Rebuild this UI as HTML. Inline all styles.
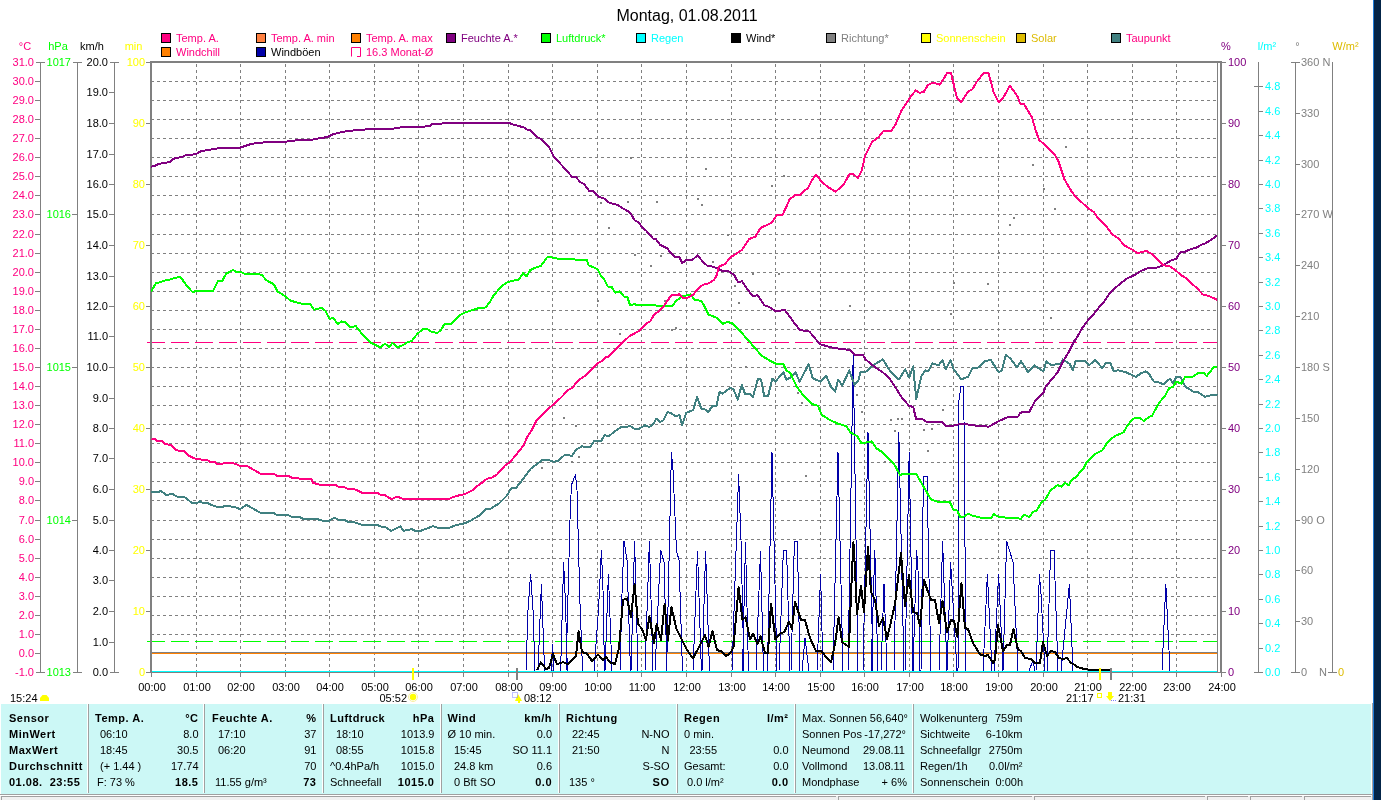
<!DOCTYPE html>
<html><head><meta charset="utf-8"><title>Wetter 01.08.2011</title>
<style>
html,body{margin:0;padding:0;background:#fff;width:1381px;height:800px;overflow:hidden}
svg{display:block;will-change:transform}
svg text{font-family:"Liberation Sans",sans-serif;font-size:11px}
</style></head><body>
<svg width="1381" height="800" viewBox="0 0 1381 800">
<rect x="0" y="0" width="1381" height="800" fill="#fff"/>
<text x="687.0" y="21.0" fill="#000" text-anchor="middle" style="font-size:16px">Montag, 01.08.2011</text>
<rect x="161.5" y="33.5" width="9" height="9" fill="#FF0080" stroke="#000" stroke-width="1"/>
<text x="176.0" y="42.0" fill="#FF0080">Temp. A.</text>
<rect x="256.5" y="33.5" width="9" height="9" fill="#FF8040" stroke="#000" stroke-width="1"/>
<text x="271.0" y="42.0" fill="#FF0080">Temp. A. min</text>
<rect x="351.5" y="33.5" width="9" height="9" fill="#FF8000" stroke="#000" stroke-width="1"/>
<text x="366.0" y="42.0" fill="#FF0080">Temp. A. max</text>
<rect x="446.5" y="33.5" width="9" height="9" fill="#800080" stroke="#000" stroke-width="1"/>
<text x="461.0" y="42.0" fill="#800080">Feuchte A.*</text>
<rect x="541.5" y="33.5" width="9" height="9" fill="#00FF00" stroke="#000" stroke-width="1"/>
<text x="556.0" y="42.0" fill="#00FF00">Luftdruck*</text>
<rect x="636.5" y="33.5" width="9" height="9" fill="#00FFFF" stroke="#000" stroke-width="1"/>
<text x="651.0" y="42.0" fill="#00FFFF">Regen</text>
<rect x="731.5" y="33.5" width="9" height="9" fill="#000" stroke="#000" stroke-width="1"/>
<text x="746.0" y="42.0" fill="#000">Wind*</text>
<rect x="826.5" y="33.5" width="9" height="9" fill="#808080" stroke="#000" stroke-width="1"/>
<text x="841.0" y="42.0" fill="#808080">Richtung*</text>
<rect x="921.5" y="33.5" width="9" height="9" fill="#FFFF00" stroke="#000" stroke-width="1"/>
<text x="936.0" y="42.0" fill="#FFFF00">Sonnenschein</text>
<rect x="1016.5" y="33.5" width="9" height="9" fill="#DDBB00" stroke="#000" stroke-width="1"/>
<text x="1031.0" y="42.0" fill="#DDBB00">Solar</text>
<rect x="1111.5" y="33.5" width="9" height="9" fill="#408080" stroke="#000" stroke-width="1"/>
<text x="1126.0" y="42.0" fill="#FF0080">Taupunkt</text>
<rect x="161.5" y="47.5" width="9" height="9" fill="#FF8000" stroke="#000" stroke-width="1"/>
<text x="176.0" y="56.0" fill="#FF0080">Windchill</text>
<rect x="256.5" y="47.5" width="9" height="9" fill="#0000A8" stroke="#000" stroke-width="1"/>
<text x="271.0" y="56.0" fill="#000">Windböen</text>
<path d="M351.5 56.5 V47.5 H360.5 V56.5 H357" fill="none" stroke="#FF0080" stroke-width="1"/>
<text x="366.0" y="56.0" fill="#FF0080">16.3 Monat-Ø</text>
<text x="25.0" y="50.0" fill="#FF0080" text-anchor="middle">°C</text>
<text x="58.0" y="50.0" fill="#00FF00" text-anchor="middle">hPa</text>
<text x="92.0" y="50.0" fill="#000" text-anchor="middle">km/h</text>
<text x="133.5" y="50.0" fill="#FFFF00" text-anchor="middle">min</text>
<text x="1226.0" y="50.0" fill="#800080" text-anchor="middle">%</text>
<text x="1267.0" y="50.0" fill="#00FFFF" text-anchor="middle">l/m²</text>
<text x="1297.5" y="50.0" fill="#808080" text-anchor="middle">°</text>
<text x="1345.5" y="50.0" fill="#DDBB00" text-anchor="middle">W/m²</text>
<g shape-rendering="crispEdges">
<line x1="40.5" y1="62" x2="40.5" y2="673" stroke="#808080" stroke-width="1"/>
<line x1="77.5" y1="62" x2="77.5" y2="673" stroke="#808080" stroke-width="1"/>
<line x1="114.5" y1="62" x2="114.5" y2="673" stroke="#808080" stroke-width="1"/>
<line x1="36" y1="62.5" x2="45" y2="62.5" stroke="#808080" stroke-width="1"/>
<text x="34.0" y="66.0" fill="#FF0080" text-anchor="end">31.0</text>
<line x1="35" y1="81.5" x2="40" y2="81.5" stroke="#808080" stroke-width="1"/>
<text x="34.0" y="85.0" fill="#FF0080" text-anchor="end">30.0</text>
<line x1="35" y1="100.5" x2="40" y2="100.5" stroke="#808080" stroke-width="1"/>
<text x="34.0" y="104.0" fill="#FF0080" text-anchor="end">29.0</text>
<line x1="35" y1="119.5" x2="40" y2="119.5" stroke="#808080" stroke-width="1"/>
<text x="34.0" y="123.0" fill="#FF0080" text-anchor="end">28.0</text>
<line x1="35" y1="138.5" x2="40" y2="138.5" stroke="#808080" stroke-width="1"/>
<text x="34.0" y="142.0" fill="#FF0080" text-anchor="end">27.0</text>
<line x1="35" y1="157.5" x2="40" y2="157.5" stroke="#808080" stroke-width="1"/>
<text x="34.0" y="161.0" fill="#FF0080" text-anchor="end">26.0</text>
<line x1="35" y1="176.5" x2="40" y2="176.5" stroke="#808080" stroke-width="1"/>
<text x="34.0" y="180.0" fill="#FF0080" text-anchor="end">25.0</text>
<line x1="35" y1="195.5" x2="40" y2="195.5" stroke="#808080" stroke-width="1"/>
<text x="34.0" y="199.0" fill="#FF0080" text-anchor="end">24.0</text>
<line x1="35" y1="214.5" x2="40" y2="214.5" stroke="#808080" stroke-width="1"/>
<text x="34.0" y="218.0" fill="#FF0080" text-anchor="end">23.0</text>
<line x1="35" y1="234.5" x2="40" y2="234.5" stroke="#808080" stroke-width="1"/>
<text x="34.0" y="238.0" fill="#FF0080" text-anchor="end">22.0</text>
<line x1="35" y1="253.5" x2="40" y2="253.5" stroke="#808080" stroke-width="1"/>
<text x="34.0" y="257.0" fill="#FF0080" text-anchor="end">21.0</text>
<line x1="35" y1="272.5" x2="40" y2="272.5" stroke="#808080" stroke-width="1"/>
<text x="34.0" y="276.0" fill="#FF0080" text-anchor="end">20.0</text>
<line x1="35" y1="291.5" x2="40" y2="291.5" stroke="#808080" stroke-width="1"/>
<text x="34.0" y="295.0" fill="#FF0080" text-anchor="end">19.0</text>
<line x1="35" y1="310.5" x2="40" y2="310.5" stroke="#808080" stroke-width="1"/>
<text x="34.0" y="314.0" fill="#FF0080" text-anchor="end">18.0</text>
<line x1="35" y1="329.5" x2="40" y2="329.5" stroke="#808080" stroke-width="1"/>
<text x="34.0" y="333.0" fill="#FF0080" text-anchor="end">17.0</text>
<line x1="35" y1="348.5" x2="40" y2="348.5" stroke="#808080" stroke-width="1"/>
<text x="34.0" y="352.0" fill="#FF0080" text-anchor="end">16.0</text>
<line x1="35" y1="367.5" x2="40" y2="367.5" stroke="#808080" stroke-width="1"/>
<text x="34.0" y="371.0" fill="#FF0080" text-anchor="end">15.0</text>
<line x1="35" y1="386.5" x2="40" y2="386.5" stroke="#808080" stroke-width="1"/>
<text x="34.0" y="390.0" fill="#FF0080" text-anchor="end">14.0</text>
<line x1="35" y1="405.5" x2="40" y2="405.5" stroke="#808080" stroke-width="1"/>
<text x="34.0" y="409.0" fill="#FF0080" text-anchor="end">13.0</text>
<line x1="35" y1="424.5" x2="40" y2="424.5" stroke="#808080" stroke-width="1"/>
<text x="34.0" y="428.0" fill="#FF0080" text-anchor="end">12.0</text>
<line x1="35" y1="443.5" x2="40" y2="443.5" stroke="#808080" stroke-width="1"/>
<text x="34.0" y="447.0" fill="#FF0080" text-anchor="end">11.0</text>
<line x1="35" y1="462.5" x2="40" y2="462.5" stroke="#808080" stroke-width="1"/>
<text x="34.0" y="466.0" fill="#FF0080" text-anchor="end">10.0</text>
<line x1="35" y1="481.5" x2="40" y2="481.5" stroke="#808080" stroke-width="1"/>
<text x="34.0" y="485.0" fill="#FF0080" text-anchor="end">9.0</text>
<line x1="35" y1="500.5" x2="40" y2="500.5" stroke="#808080" stroke-width="1"/>
<text x="34.0" y="504.0" fill="#FF0080" text-anchor="end">8.0</text>
<line x1="35" y1="520.5" x2="40" y2="520.5" stroke="#808080" stroke-width="1"/>
<text x="34.0" y="524.0" fill="#FF0080" text-anchor="end">7.0</text>
<line x1="35" y1="539.5" x2="40" y2="539.5" stroke="#808080" stroke-width="1"/>
<text x="34.0" y="543.0" fill="#FF0080" text-anchor="end">6.0</text>
<line x1="35" y1="558.5" x2="40" y2="558.5" stroke="#808080" stroke-width="1"/>
<text x="34.0" y="562.0" fill="#FF0080" text-anchor="end">5.0</text>
<line x1="35" y1="577.5" x2="40" y2="577.5" stroke="#808080" stroke-width="1"/>
<text x="34.0" y="581.0" fill="#FF0080" text-anchor="end">4.0</text>
<line x1="35" y1="596.5" x2="40" y2="596.5" stroke="#808080" stroke-width="1"/>
<text x="34.0" y="600.0" fill="#FF0080" text-anchor="end">3.0</text>
<line x1="35" y1="615.5" x2="40" y2="615.5" stroke="#808080" stroke-width="1"/>
<text x="34.0" y="619.0" fill="#FF0080" text-anchor="end">2.0</text>
<line x1="35" y1="634.5" x2="40" y2="634.5" stroke="#808080" stroke-width="1"/>
<text x="34.0" y="638.0" fill="#FF0080" text-anchor="end">1.0</text>
<line x1="35" y1="653.5" x2="40" y2="653.5" stroke="#808080" stroke-width="1"/>
<text x="34.0" y="657.0" fill="#FF0080" text-anchor="end">0.0</text>
<line x1="36" y1="672.5" x2="45" y2="672.5" stroke="#808080" stroke-width="1"/>
<text x="34.0" y="676.0" fill="#FF0080" text-anchor="end">-1.0</text>
<line x1="73" y1="62.5" x2="82" y2="62.5" stroke="#808080" stroke-width="1"/>
<text x="71.0" y="66.0" fill="#00FF00" text-anchor="end">1017</text>
<line x1="72" y1="214.5" x2="77" y2="214.5" stroke="#808080" stroke-width="1"/>
<text x="71.0" y="218.0" fill="#00FF00" text-anchor="end">1016</text>
<line x1="72" y1="367.5" x2="77" y2="367.5" stroke="#808080" stroke-width="1"/>
<text x="71.0" y="371.0" fill="#00FF00" text-anchor="end">1015</text>
<line x1="72" y1="520.5" x2="77" y2="520.5" stroke="#808080" stroke-width="1"/>
<text x="71.0" y="524.0" fill="#00FF00" text-anchor="end">1014</text>
<line x1="73" y1="672.5" x2="82" y2="672.5" stroke="#808080" stroke-width="1"/>
<text x="71.0" y="676.0" fill="#00FF00" text-anchor="end">1013</text>
<line x1="110" y1="62.5" x2="119" y2="62.5" stroke="#808080" stroke-width="1"/>
<text x="108.0" y="66.0" fill="#000" text-anchor="end">20.0</text>
<line x1="109" y1="92.5" x2="114" y2="92.5" stroke="#808080" stroke-width="1"/>
<text x="108.0" y="96.0" fill="#000" text-anchor="end">19.0</text>
<line x1="109" y1="123.5" x2="114" y2="123.5" stroke="#808080" stroke-width="1"/>
<text x="108.0" y="127.0" fill="#000" text-anchor="end">18.0</text>
<line x1="109" y1="154.5" x2="114" y2="154.5" stroke="#808080" stroke-width="1"/>
<text x="108.0" y="158.0" fill="#000" text-anchor="end">17.0</text>
<line x1="109" y1="184.5" x2="114" y2="184.5" stroke="#808080" stroke-width="1"/>
<text x="108.0" y="188.0" fill="#000" text-anchor="end">16.0</text>
<line x1="109" y1="214.5" x2="114" y2="214.5" stroke="#808080" stroke-width="1"/>
<text x="108.0" y="218.0" fill="#000" text-anchor="end">15.0</text>
<line x1="109" y1="245.5" x2="114" y2="245.5" stroke="#808080" stroke-width="1"/>
<text x="108.0" y="249.0" fill="#000" text-anchor="end">14.0</text>
<line x1="109" y1="276.5" x2="114" y2="276.5" stroke="#808080" stroke-width="1"/>
<text x="108.0" y="280.0" fill="#000" text-anchor="end">13.0</text>
<line x1="109" y1="306.5" x2="114" y2="306.5" stroke="#808080" stroke-width="1"/>
<text x="108.0" y="310.0" fill="#000" text-anchor="end">12.0</text>
<line x1="109" y1="336.5" x2="114" y2="336.5" stroke="#808080" stroke-width="1"/>
<text x="108.0" y="340.0" fill="#000" text-anchor="end">11.0</text>
<line x1="109" y1="367.5" x2="114" y2="367.5" stroke="#808080" stroke-width="1"/>
<text x="108.0" y="371.0" fill="#000" text-anchor="end">10.0</text>
<line x1="109" y1="398.5" x2="114" y2="398.5" stroke="#808080" stroke-width="1"/>
<text x="108.0" y="402.0" fill="#000" text-anchor="end">9.0</text>
<line x1="109" y1="428.5" x2="114" y2="428.5" stroke="#808080" stroke-width="1"/>
<text x="108.0" y="432.0" fill="#000" text-anchor="end">8.0</text>
<line x1="109" y1="458.5" x2="114" y2="458.5" stroke="#808080" stroke-width="1"/>
<text x="108.0" y="462.0" fill="#000" text-anchor="end">7.0</text>
<line x1="109" y1="489.5" x2="114" y2="489.5" stroke="#808080" stroke-width="1"/>
<text x="108.0" y="493.0" fill="#000" text-anchor="end">6.0</text>
<line x1="109" y1="520.5" x2="114" y2="520.5" stroke="#808080" stroke-width="1"/>
<text x="108.0" y="524.0" fill="#000" text-anchor="end">5.0</text>
<line x1="109" y1="550.5" x2="114" y2="550.5" stroke="#808080" stroke-width="1"/>
<text x="108.0" y="554.0" fill="#000" text-anchor="end">4.0</text>
<line x1="109" y1="580.5" x2="114" y2="580.5" stroke="#808080" stroke-width="1"/>
<text x="108.0" y="584.0" fill="#000" text-anchor="end">3.0</text>
<line x1="109" y1="611.5" x2="114" y2="611.5" stroke="#808080" stroke-width="1"/>
<text x="108.0" y="615.0" fill="#000" text-anchor="end">2.0</text>
<line x1="109" y1="642.5" x2="114" y2="642.5" stroke="#808080" stroke-width="1"/>
<text x="108.0" y="646.0" fill="#000" text-anchor="end">1.0</text>
<line x1="110" y1="672.5" x2="119" y2="672.5" stroke="#808080" stroke-width="1"/>
<text x="108.0" y="676.0" fill="#000" text-anchor="end">0.0</text>
<line x1="146" y1="62.5" x2="150" y2="62.5" stroke="#808080" stroke-width="1"/>
<text x="145.0" y="66.0" fill="#FFFF00" text-anchor="end">100</text>
<line x1="146" y1="123.5" x2="150" y2="123.5" stroke="#808080" stroke-width="1"/>
<text x="145.0" y="127.0" fill="#FFFF00" text-anchor="end">90</text>
<line x1="146" y1="184.5" x2="150" y2="184.5" stroke="#808080" stroke-width="1"/>
<text x="145.0" y="188.0" fill="#FFFF00" text-anchor="end">80</text>
<line x1="146" y1="245.5" x2="150" y2="245.5" stroke="#808080" stroke-width="1"/>
<text x="145.0" y="249.0" fill="#FFFF00" text-anchor="end">70</text>
<line x1="146" y1="306.5" x2="150" y2="306.5" stroke="#808080" stroke-width="1"/>
<text x="145.0" y="310.0" fill="#FFFF00" text-anchor="end">60</text>
<line x1="146" y1="367.5" x2="150" y2="367.5" stroke="#808080" stroke-width="1"/>
<text x="145.0" y="371.0" fill="#FFFF00" text-anchor="end">50</text>
<line x1="146" y1="428.5" x2="150" y2="428.5" stroke="#808080" stroke-width="1"/>
<text x="145.0" y="432.0" fill="#FFFF00" text-anchor="end">40</text>
<line x1="146" y1="489.5" x2="150" y2="489.5" stroke="#808080" stroke-width="1"/>
<text x="145.0" y="493.0" fill="#FFFF00" text-anchor="end">30</text>
<line x1="146" y1="550.5" x2="150" y2="550.5" stroke="#808080" stroke-width="1"/>
<text x="145.0" y="554.0" fill="#FFFF00" text-anchor="end">20</text>
<line x1="146" y1="611.5" x2="150" y2="611.5" stroke="#808080" stroke-width="1"/>
<text x="145.0" y="615.0" fill="#FFFF00" text-anchor="end">10</text>
<line x1="146" y1="672.5" x2="150" y2="672.5" stroke="#808080" stroke-width="1"/>
<text x="145.0" y="676.0" fill="#FFFF00" text-anchor="end">0</text>
<line x1="1222" y1="62.5" x2="1226" y2="62.5" stroke="#808080" stroke-width="1"/>
<text x="1228.0" y="66.0" fill="#800080">100</text>
<line x1="1222" y1="123.5" x2="1226" y2="123.5" stroke="#808080" stroke-width="1"/>
<text x="1228.0" y="127.0" fill="#800080">90</text>
<line x1="1222" y1="184.5" x2="1226" y2="184.5" stroke="#808080" stroke-width="1"/>
<text x="1228.0" y="188.0" fill="#800080">80</text>
<line x1="1222" y1="245.5" x2="1226" y2="245.5" stroke="#808080" stroke-width="1"/>
<text x="1228.0" y="249.0" fill="#800080">70</text>
<line x1="1222" y1="306.5" x2="1226" y2="306.5" stroke="#808080" stroke-width="1"/>
<text x="1228.0" y="310.0" fill="#800080">60</text>
<line x1="1222" y1="367.5" x2="1226" y2="367.5" stroke="#808080" stroke-width="1"/>
<text x="1228.0" y="371.0" fill="#800080">50</text>
<line x1="1222" y1="428.5" x2="1226" y2="428.5" stroke="#808080" stroke-width="1"/>
<text x="1228.0" y="432.0" fill="#800080">40</text>
<line x1="1222" y1="489.5" x2="1226" y2="489.5" stroke="#808080" stroke-width="1"/>
<text x="1228.0" y="493.0" fill="#800080">30</text>
<line x1="1222" y1="550.5" x2="1226" y2="550.5" stroke="#808080" stroke-width="1"/>
<text x="1228.0" y="554.0" fill="#800080">20</text>
<line x1="1222" y1="611.5" x2="1226" y2="611.5" stroke="#808080" stroke-width="1"/>
<text x="1228.0" y="615.0" fill="#800080">10</text>
<line x1="1222" y1="672.5" x2="1226" y2="672.5" stroke="#808080" stroke-width="1"/>
<text x="1228.0" y="676.0" fill="#800080">0</text>
<line x1="1258.5" y1="62" x2="1258.5" y2="673" stroke="#808080" stroke-width="1"/>
<line x1="1254" y1="86.5" x2="1263" y2="86.5" stroke="#808080" stroke-width="1"/>
<text x="1265.0" y="90.0" fill="#00FFFF">4.8</text>
<line x1="1259" y1="111.5" x2="1263" y2="111.5" stroke="#808080" stroke-width="1"/>
<text x="1265.0" y="115.0" fill="#00FFFF">4.6</text>
<line x1="1259" y1="135.5" x2="1263" y2="135.5" stroke="#808080" stroke-width="1"/>
<text x="1265.0" y="139.0" fill="#00FFFF">4.4</text>
<line x1="1259" y1="160.5" x2="1263" y2="160.5" stroke="#808080" stroke-width="1"/>
<text x="1265.0" y="164.0" fill="#00FFFF">4.2</text>
<line x1="1259" y1="184.5" x2="1263" y2="184.5" stroke="#808080" stroke-width="1"/>
<text x="1265.0" y="188.0" fill="#00FFFF">4.0</text>
<line x1="1259" y1="208.5" x2="1263" y2="208.5" stroke="#808080" stroke-width="1"/>
<text x="1265.0" y="212.0" fill="#00FFFF">3.8</text>
<line x1="1259" y1="233.5" x2="1263" y2="233.5" stroke="#808080" stroke-width="1"/>
<text x="1265.0" y="237.0" fill="#00FFFF">3.6</text>
<line x1="1259" y1="257.5" x2="1263" y2="257.5" stroke="#808080" stroke-width="1"/>
<text x="1265.0" y="261.0" fill="#00FFFF">3.4</text>
<line x1="1259" y1="282.5" x2="1263" y2="282.5" stroke="#808080" stroke-width="1"/>
<text x="1265.0" y="286.0" fill="#00FFFF">3.2</text>
<line x1="1259" y1="306.5" x2="1263" y2="306.5" stroke="#808080" stroke-width="1"/>
<text x="1265.0" y="310.0" fill="#00FFFF">3.0</text>
<line x1="1259" y1="330.5" x2="1263" y2="330.5" stroke="#808080" stroke-width="1"/>
<text x="1265.0" y="334.0" fill="#00FFFF">2.8</text>
<line x1="1259" y1="355.5" x2="1263" y2="355.5" stroke="#808080" stroke-width="1"/>
<text x="1265.0" y="359.0" fill="#00FFFF">2.6</text>
<line x1="1259" y1="379.5" x2="1263" y2="379.5" stroke="#808080" stroke-width="1"/>
<text x="1265.0" y="383.0" fill="#00FFFF">2.4</text>
<line x1="1259" y1="404.5" x2="1263" y2="404.5" stroke="#808080" stroke-width="1"/>
<text x="1265.0" y="408.0" fill="#00FFFF">2.2</text>
<line x1="1259" y1="428.5" x2="1263" y2="428.5" stroke="#808080" stroke-width="1"/>
<text x="1265.0" y="432.0" fill="#00FFFF">2.0</text>
<line x1="1259" y1="452.5" x2="1263" y2="452.5" stroke="#808080" stroke-width="1"/>
<text x="1265.0" y="456.0" fill="#00FFFF">1.8</text>
<line x1="1259" y1="477.5" x2="1263" y2="477.5" stroke="#808080" stroke-width="1"/>
<text x="1265.0" y="481.0" fill="#00FFFF">1.6</text>
<line x1="1259" y1="501.5" x2="1263" y2="501.5" stroke="#808080" stroke-width="1"/>
<text x="1265.0" y="505.0" fill="#00FFFF">1.4</text>
<line x1="1259" y1="526.5" x2="1263" y2="526.5" stroke="#808080" stroke-width="1"/>
<text x="1265.0" y="530.0" fill="#00FFFF">1.2</text>
<line x1="1259" y1="550.5" x2="1263" y2="550.5" stroke="#808080" stroke-width="1"/>
<text x="1265.0" y="554.0" fill="#00FFFF">1.0</text>
<line x1="1259" y1="574.5" x2="1263" y2="574.5" stroke="#808080" stroke-width="1"/>
<text x="1265.0" y="578.0" fill="#00FFFF">0.8</text>
<line x1="1259" y1="599.5" x2="1263" y2="599.5" stroke="#808080" stroke-width="1"/>
<text x="1265.0" y="603.0" fill="#00FFFF">0.6</text>
<line x1="1259" y1="623.5" x2="1263" y2="623.5" stroke="#808080" stroke-width="1"/>
<text x="1265.0" y="627.0" fill="#00FFFF">0.4</text>
<line x1="1259" y1="648.5" x2="1263" y2="648.5" stroke="#808080" stroke-width="1"/>
<text x="1265.0" y="652.0" fill="#00FFFF">0.2</text>
<line x1="1254" y1="672.5" x2="1263" y2="672.5" stroke="#808080" stroke-width="1"/>
<text x="1265.0" y="676.0" fill="#00FFFF">0.0</text>
<line x1="1295.5" y1="62" x2="1295.5" y2="673" stroke="#808080" stroke-width="1"/>
<line x1="1291" y1="62.5" x2="1300" y2="62.5" stroke="#808080" stroke-width="1"/>
<text x="1301.0" y="66.0" fill="#808080">360 N</text>
<line x1="1296" y1="113.5" x2="1300" y2="113.5" stroke="#808080" stroke-width="1"/>
<text x="1301.0" y="117.0" fill="#808080">330</text>
<line x1="1296" y1="164.5" x2="1300" y2="164.5" stroke="#808080" stroke-width="1"/>
<text x="1301.0" y="168.0" fill="#808080">300</text>
<line x1="1296" y1="214.5" x2="1300" y2="214.5" stroke="#808080" stroke-width="1"/>
<text x="1301.0" y="218.0" fill="#808080">270 W</text>
<line x1="1296" y1="265.5" x2="1300" y2="265.5" stroke="#808080" stroke-width="1"/>
<text x="1301.0" y="269.0" fill="#808080">240</text>
<line x1="1296" y1="316.5" x2="1300" y2="316.5" stroke="#808080" stroke-width="1"/>
<text x="1301.0" y="320.0" fill="#808080">210</text>
<line x1="1296" y1="367.5" x2="1300" y2="367.5" stroke="#808080" stroke-width="1"/>
<text x="1301.0" y="371.0" fill="#808080">180 S</text>
<line x1="1296" y1="418.5" x2="1300" y2="418.5" stroke="#808080" stroke-width="1"/>
<text x="1301.0" y="422.0" fill="#808080">150</text>
<line x1="1296" y1="469.5" x2="1300" y2="469.5" stroke="#808080" stroke-width="1"/>
<text x="1301.0" y="473.0" fill="#808080">120</text>
<line x1="1296" y1="520.5" x2="1300" y2="520.5" stroke="#808080" stroke-width="1"/>
<text x="1301.0" y="524.0" fill="#808080">90 O</text>
<line x1="1296" y1="570.5" x2="1300" y2="570.5" stroke="#808080" stroke-width="1"/>
<text x="1301.0" y="574.0" fill="#808080">60</text>
<line x1="1296" y1="621.5" x2="1300" y2="621.5" stroke="#808080" stroke-width="1"/>
<text x="1301.0" y="625.0" fill="#808080">30</text>
<line x1="1291" y1="672.5" x2="1300" y2="672.5" stroke="#808080" stroke-width="1"/>
<text x="1301.0" y="676.0" fill="#808080">0</text>
<text x="1319.0" y="676.0" fill="#808080">N</text>
<line x1="1332.5" y1="62" x2="1332.5" y2="673" stroke="#808080" stroke-width="1"/>
<line x1="1328" y1="672.5" x2="1337" y2="672.5" stroke="#808080" stroke-width="1"/>
<text x="1338.0" y="676.0" fill="#DDBB00">0</text>
<line x1="151" y1="81.5" x2="1217" y2="81.5" stroke="#808080" stroke-width="1" stroke-dasharray="3 3"/>
<line x1="151" y1="100.5" x2="1217" y2="100.5" stroke="#808080" stroke-width="1" stroke-dasharray="3 3"/>
<line x1="151" y1="119.5" x2="1217" y2="119.5" stroke="#808080" stroke-width="1" stroke-dasharray="3 3"/>
<line x1="151" y1="138.5" x2="1217" y2="138.5" stroke="#808080" stroke-width="1" stroke-dasharray="3 3"/>
<line x1="151" y1="157.5" x2="1217" y2="157.5" stroke="#808080" stroke-width="1" stroke-dasharray="3 3"/>
<line x1="151" y1="176.5" x2="1217" y2="176.5" stroke="#808080" stroke-width="1" stroke-dasharray="3 3"/>
<line x1="151" y1="195.5" x2="1217" y2="195.5" stroke="#808080" stroke-width="1" stroke-dasharray="3 3"/>
<line x1="151" y1="214.5" x2="1217" y2="214.5" stroke="#808080" stroke-width="1" stroke-dasharray="3 3"/>
<line x1="151" y1="234.5" x2="1217" y2="234.5" stroke="#808080" stroke-width="1" stroke-dasharray="3 3"/>
<line x1="151" y1="253.5" x2="1217" y2="253.5" stroke="#808080" stroke-width="1" stroke-dasharray="3 3"/>
<line x1="151" y1="272.5" x2="1217" y2="272.5" stroke="#808080" stroke-width="1" stroke-dasharray="3 3"/>
<line x1="151" y1="291.5" x2="1217" y2="291.5" stroke="#808080" stroke-width="1" stroke-dasharray="3 3"/>
<line x1="151" y1="310.5" x2="1217" y2="310.5" stroke="#808080" stroke-width="1" stroke-dasharray="3 3"/>
<line x1="151" y1="329.5" x2="1217" y2="329.5" stroke="#808080" stroke-width="1" stroke-dasharray="3 3"/>
<line x1="151" y1="348.5" x2="1217" y2="348.5" stroke="#808080" stroke-width="1" stroke-dasharray="3 3"/>
<line x1="151" y1="367.5" x2="1217" y2="367.5" stroke="#808080" stroke-width="1" stroke-dasharray="3 3"/>
<line x1="151" y1="386.5" x2="1217" y2="386.5" stroke="#808080" stroke-width="1" stroke-dasharray="3 3"/>
<line x1="151" y1="405.5" x2="1217" y2="405.5" stroke="#808080" stroke-width="1" stroke-dasharray="3 3"/>
<line x1="151" y1="424.5" x2="1217" y2="424.5" stroke="#808080" stroke-width="1" stroke-dasharray="3 3"/>
<line x1="151" y1="443.5" x2="1217" y2="443.5" stroke="#808080" stroke-width="1" stroke-dasharray="3 3"/>
<line x1="151" y1="462.5" x2="1217" y2="462.5" stroke="#808080" stroke-width="1" stroke-dasharray="3 3"/>
<line x1="151" y1="481.5" x2="1217" y2="481.5" stroke="#808080" stroke-width="1" stroke-dasharray="3 3"/>
<line x1="151" y1="500.5" x2="1217" y2="500.5" stroke="#808080" stroke-width="1" stroke-dasharray="3 3"/>
<line x1="151" y1="520.5" x2="1217" y2="520.5" stroke="#808080" stroke-width="1" stroke-dasharray="3 3"/>
<line x1="151" y1="539.5" x2="1217" y2="539.5" stroke="#808080" stroke-width="1" stroke-dasharray="3 3"/>
<line x1="151" y1="558.5" x2="1217" y2="558.5" stroke="#808080" stroke-width="1" stroke-dasharray="3 3"/>
<line x1="151" y1="577.5" x2="1217" y2="577.5" stroke="#808080" stroke-width="1" stroke-dasharray="3 3"/>
<line x1="151" y1="596.5" x2="1217" y2="596.5" stroke="#808080" stroke-width="1" stroke-dasharray="3 3"/>
<line x1="151" y1="615.5" x2="1217" y2="615.5" stroke="#808080" stroke-width="1" stroke-dasharray="3 3"/>
<line x1="151" y1="634.5" x2="1217" y2="634.5" stroke="#808080" stroke-width="1" stroke-dasharray="3 3"/>
<line x1="151" y1="653.5" x2="1217" y2="653.5" stroke="#808080" stroke-width="1" stroke-dasharray="3 3"/>
<line x1="196.5" y1="64" x2="196.5" y2="672" stroke="#808080" stroke-width="1" stroke-dasharray="3 3"/>
<line x1="240.5" y1="64" x2="240.5" y2="672" stroke="#808080" stroke-width="1" stroke-dasharray="3 3"/>
<line x1="285.5" y1="64" x2="285.5" y2="672" stroke="#808080" stroke-width="1" stroke-dasharray="3 3"/>
<line x1="329.5" y1="64" x2="329.5" y2="672" stroke="#808080" stroke-width="1" stroke-dasharray="3 3"/>
<line x1="374.5" y1="64" x2="374.5" y2="672" stroke="#808080" stroke-width="1" stroke-dasharray="3 3"/>
<line x1="418.5" y1="64" x2="418.5" y2="672" stroke="#808080" stroke-width="1" stroke-dasharray="3 3"/>
<line x1="463.5" y1="64" x2="463.5" y2="672" stroke="#808080" stroke-width="1" stroke-dasharray="3 3"/>
<line x1="508.5" y1="64" x2="508.5" y2="672" stroke="#808080" stroke-width="1" stroke-dasharray="3 3"/>
<line x1="552.5" y1="64" x2="552.5" y2="672" stroke="#808080" stroke-width="1" stroke-dasharray="3 3"/>
<line x1="597.5" y1="64" x2="597.5" y2="672" stroke="#808080" stroke-width="1" stroke-dasharray="3 3"/>
<line x1="641.5" y1="64" x2="641.5" y2="672" stroke="#808080" stroke-width="1" stroke-dasharray="3 3"/>
<line x1="686.5" y1="64" x2="686.5" y2="672" stroke="#808080" stroke-width="1" stroke-dasharray="3 3"/>
<line x1="731.5" y1="64" x2="731.5" y2="672" stroke="#808080" stroke-width="1" stroke-dasharray="3 3"/>
<line x1="775.5" y1="64" x2="775.5" y2="672" stroke="#808080" stroke-width="1" stroke-dasharray="3 3"/>
<line x1="820.5" y1="64" x2="820.5" y2="672" stroke="#808080" stroke-width="1" stroke-dasharray="3 3"/>
<line x1="864.5" y1="64" x2="864.5" y2="672" stroke="#808080" stroke-width="1" stroke-dasharray="3 3"/>
<line x1="909.5" y1="64" x2="909.5" y2="672" stroke="#808080" stroke-width="1" stroke-dasharray="3 3"/>
<line x1="953.5" y1="64" x2="953.5" y2="672" stroke="#808080" stroke-width="1" stroke-dasharray="3 3"/>
<line x1="998.5" y1="64" x2="998.5" y2="672" stroke="#808080" stroke-width="1" stroke-dasharray="3 3"/>
<line x1="1043.5" y1="64" x2="1043.5" y2="672" stroke="#808080" stroke-width="1" stroke-dasharray="3 3"/>
<line x1="1087.5" y1="64" x2="1087.5" y2="672" stroke="#808080" stroke-width="1" stroke-dasharray="3 3"/>
<line x1="1132.5" y1="64" x2="1132.5" y2="672" stroke="#808080" stroke-width="1" stroke-dasharray="3 3"/>
<line x1="1176.5" y1="64" x2="1176.5" y2="672" stroke="#808080" stroke-width="1" stroke-dasharray="3 3"/>
<line x1="151.5" y1="672" x2="151.5" y2="677" stroke="#808080" stroke-width="1"/>
<text x="152.0" y="691.0" fill="#000" text-anchor="middle">00:00</text>
<line x1="196.5" y1="672" x2="196.5" y2="677" stroke="#808080" stroke-width="1"/>
<text x="197.0" y="691.0" fill="#000" text-anchor="middle">01:00</text>
<line x1="240.5" y1="672" x2="240.5" y2="677" stroke="#808080" stroke-width="1"/>
<text x="241.0" y="691.0" fill="#000" text-anchor="middle">02:00</text>
<line x1="285.5" y1="672" x2="285.5" y2="677" stroke="#808080" stroke-width="1"/>
<text x="286.0" y="691.0" fill="#000" text-anchor="middle">03:00</text>
<line x1="329.5" y1="672" x2="329.5" y2="677" stroke="#808080" stroke-width="1"/>
<text x="330.0" y="691.0" fill="#000" text-anchor="middle">04:00</text>
<line x1="374.5" y1="672" x2="374.5" y2="677" stroke="#808080" stroke-width="1"/>
<text x="375.0" y="691.0" fill="#000" text-anchor="middle">05:00</text>
<line x1="418.5" y1="672" x2="418.5" y2="677" stroke="#808080" stroke-width="1"/>
<text x="419.0" y="691.0" fill="#000" text-anchor="middle">06:00</text>
<line x1="463.5" y1="672" x2="463.5" y2="677" stroke="#808080" stroke-width="1"/>
<text x="464.0" y="691.0" fill="#000" text-anchor="middle">07:00</text>
<line x1="508.5" y1="672" x2="508.5" y2="677" stroke="#808080" stroke-width="1"/>
<text x="509.0" y="691.0" fill="#000" text-anchor="middle">08:00</text>
<line x1="552.5" y1="672" x2="552.5" y2="677" stroke="#808080" stroke-width="1"/>
<text x="553.0" y="691.0" fill="#000" text-anchor="middle">09:00</text>
<line x1="597.5" y1="672" x2="597.5" y2="677" stroke="#808080" stroke-width="1"/>
<text x="598.0" y="691.0" fill="#000" text-anchor="middle">10:00</text>
<line x1="641.5" y1="672" x2="641.5" y2="677" stroke="#808080" stroke-width="1"/>
<text x="642.0" y="691.0" fill="#000" text-anchor="middle">11:00</text>
<line x1="686.5" y1="672" x2="686.5" y2="677" stroke="#808080" stroke-width="1"/>
<text x="687.0" y="691.0" fill="#000" text-anchor="middle">12:00</text>
<line x1="731.5" y1="672" x2="731.5" y2="677" stroke="#808080" stroke-width="1"/>
<text x="732.0" y="691.0" fill="#000" text-anchor="middle">13:00</text>
<line x1="775.5" y1="672" x2="775.5" y2="677" stroke="#808080" stroke-width="1"/>
<text x="776.0" y="691.0" fill="#000" text-anchor="middle">14:00</text>
<line x1="820.5" y1="672" x2="820.5" y2="677" stroke="#808080" stroke-width="1"/>
<text x="821.0" y="691.0" fill="#000" text-anchor="middle">15:00</text>
<line x1="864.5" y1="672" x2="864.5" y2="677" stroke="#808080" stroke-width="1"/>
<text x="865.0" y="691.0" fill="#000" text-anchor="middle">16:00</text>
<line x1="909.5" y1="672" x2="909.5" y2="677" stroke="#808080" stroke-width="1"/>
<text x="910.0" y="691.0" fill="#000" text-anchor="middle">17:00</text>
<line x1="953.5" y1="672" x2="953.5" y2="677" stroke="#808080" stroke-width="1"/>
<text x="954.0" y="691.0" fill="#000" text-anchor="middle">18:00</text>
<line x1="998.5" y1="672" x2="998.5" y2="677" stroke="#808080" stroke-width="1"/>
<text x="999.0" y="691.0" fill="#000" text-anchor="middle">19:00</text>
<line x1="1043.5" y1="672" x2="1043.5" y2="677" stroke="#808080" stroke-width="1"/>
<text x="1044.0" y="691.0" fill="#000" text-anchor="middle">20:00</text>
<line x1="1087.5" y1="672" x2="1087.5" y2="677" stroke="#808080" stroke-width="1"/>
<text x="1088.0" y="691.0" fill="#000" text-anchor="middle">21:00</text>
<line x1="1132.5" y1="672" x2="1132.5" y2="677" stroke="#808080" stroke-width="1"/>
<text x="1133.0" y="691.0" fill="#000" text-anchor="middle">22:00</text>
<line x1="1176.5" y1="672" x2="1176.5" y2="677" stroke="#808080" stroke-width="1"/>
<text x="1177.0" y="691.0" fill="#000" text-anchor="middle">23:00</text>
<line x1="1221.5" y1="672" x2="1221.5" y2="677" stroke="#808080" stroke-width="1"/>
<text x="1222.0" y="691.0" fill="#000" text-anchor="middle">24:00</text>
</g>
<g shape-rendering="crispEdges">
<line x1="152" y1="652.5" x2="1217" y2="652.5" stroke="#808080" stroke-width="1"/>
<line x1="152" y1="653.5" x2="1217" y2="653.5" stroke="#FF8000" stroke-width="1"/>
<line x1="147" y1="641.5" x2="1217" y2="641.5" stroke="#00FF00" stroke-width="1" stroke-dasharray="18 6"/>
<line x1="147" y1="342.5" x2="1217" y2="342.5" stroke="#FF0080" stroke-width="1" stroke-dasharray="18 6"/>
<line x1="152" y1="671.5" x2="1217" y2="671.5" stroke="#00FFFF" stroke-width="1"/>
<rect x="150" y="61" width="1072" height="2" fill="#808080"/>
<rect x="150" y="61" width="2" height="612" fill="#808080"/>
<rect x="1220" y="61" width="2" height="612" fill="#808080"/>
<rect x="150" y="672" width="1072" height="1" fill="#808080"/>
<rect x="1217" y="63" width="1" height="609" fill="#808080"/>
</g>
<rect x="1054" y="208" width="2" height="2" fill="#808080"/>
<rect x="1013" y="217" width="2" height="2" fill="#808080"/>
<rect x="1009" y="224" width="2" height="2" fill="#808080"/>
<rect x="998" y="252" width="2" height="2" fill="#808080"/>
<rect x="953" y="282" width="2" height="2" fill="#808080"/>
<rect x="987" y="283" width="2" height="2" fill="#808080"/>
<rect x="950" y="313" width="2" height="2" fill="#808080"/>
<rect x="1050" y="317" width="2" height="2" fill="#808080"/>
<rect x="942" y="409" width="2" height="2" fill="#808080"/>
<rect x="1065" y="146" width="2" height="2" fill="#808080"/>
<rect x="1032" y="164" width="2" height="2" fill="#808080"/>
<rect x="1043" y="188" width="2" height="2" fill="#808080"/>
<rect x="697" y="198" width="2" height="2" fill="#808080"/>
<rect x="701" y="204" width="2" height="2" fill="#808080"/>
<rect x="727" y="234" width="2" height="2" fill="#808080"/>
<rect x="712" y="261" width="2" height="2" fill="#808080"/>
<rect x="752" y="273" width="2" height="2" fill="#808080"/>
<rect x="778" y="273" width="2" height="2" fill="#808080"/>
<rect x="734" y="285" width="2" height="2" fill="#808080"/>
<rect x="738" y="302" width="2" height="2" fill="#808080"/>
<rect x="849" y="305" width="2" height="2" fill="#808080"/>
<rect x="745" y="366" width="2" height="2" fill="#808080"/>
<rect x="797" y="392" width="2" height="2" fill="#808080"/>
<rect x="801" y="402" width="2" height="2" fill="#808080"/>
<rect x="856" y="394" width="2" height="2" fill="#808080"/>
<rect x="861" y="411" width="2" height="2" fill="#808080"/>
<rect x="890" y="419" width="2" height="2" fill="#808080"/>
<rect x="897" y="418" width="2" height="2" fill="#808080"/>
<rect x="901" y="418" width="2" height="2" fill="#808080"/>
<rect x="894" y="430" width="2" height="2" fill="#808080"/>
<rect x="923" y="429" width="2" height="2" fill="#808080"/>
<rect x="931" y="428" width="2" height="2" fill="#808080"/>
<rect x="927" y="450" width="2" height="2" fill="#808080"/>
<rect x="884" y="461" width="2" height="2" fill="#808080"/>
<rect x="805" y="475" width="2" height="2" fill="#808080"/>
<rect x="705" y="168" width="2" height="2" fill="#808080"/>
<rect x="783" y="175" width="2" height="2" fill="#808080"/>
<rect x="771" y="185" width="2" height="2" fill="#808080"/>
<rect x="597" y="300" width="2" height="2" fill="#808080"/>
<rect x="619" y="333" width="2" height="2" fill="#808080"/>
<rect x="664" y="300" width="2" height="2" fill="#808080"/>
<rect x="671" y="329" width="2" height="2" fill="#808080"/>
<rect x="675" y="327" width="2" height="2" fill="#808080"/>
<rect x="563" y="417" width="2" height="2" fill="#808080"/>
<rect x="660" y="255" width="2" height="2" fill="#808080"/>
<rect x="630" y="157" width="2" height="2" fill="#808080"/>
<rect x="600" y="202" width="2" height="2" fill="#808080"/>
<rect x="627" y="201" width="2" height="2" fill="#808080"/>
<rect x="656" y="201" width="2" height="2" fill="#808080"/>
<rect x="608" y="227" width="2" height="2" fill="#808080"/>
<rect x="575" y="425" width="2" height="2" fill="#808080"/>
<rect x="578" y="456" width="2" height="2" fill="#808080"/>
<rect x="571" y="461" width="2" height="2" fill="#808080"/>
<rect x="541" y="467" width="2" height="2" fill="#808080"/>
<rect x="634" y="254" width="2" height="2" fill="#808080"/>
<rect x="650" y="265" width="2" height="2" fill="#808080"/>
<path d="M526.0,671 L528.0,610.0 L530.6,574.0 L533.0,610.0 L535.0,671 M538.0,671 L541.4,584.0 L544.6,671 M551.0,671 L552.6,644.0 L554.0,671 M560.6,671 L563.6,562.0 L565.5,604.0 L567.4,671 M566.0,671 L570.0,520.0 L571.4,485.0 L575.5,474.5 L577.0,490.0 L580.0,604.0 L582.6,671 M594.0,671 L598.5,610.0 L601.4,550.0 L603.0,590.0 L604.5,671 M605.0,671 L608.4,574.0 L612.0,671 M620.0,671 L622.0,594.0 L624.0,541.0 L627.0,560.0 L630.5,671 M631.0,671 L634.6,541.0 L638.0,671 M645.0,671 L649.4,541.0 L653.0,671 M655.0,671 L660.6,550.0 L664.0,562.0 L667.0,671 M666.6,671 L671.4,452.0 L673.0,470.0 L676.5,551.0 L679.0,560.0 L682.5,671 M693.0,671 L697.5,551.0 L701.4,671 M702.0,671 L705.6,551.0 L709.5,671 M732.0,671 L738.6,474.5 L741.0,540.0 L744.0,671 M742.5,671 L745.5,542.0 L748.5,671 M756.0,671 L760.5,551.0 L763.5,671 M767.4,671 L772.0,452.0 L777.0,671 M779.0,671 L783.4,550.0 L786.6,550.0 L790.0,671 M791.0,671 L794.4,541.0 L797.4,541.0 L800.0,671 M802.0,671 L805.0,638.0 L809.0,671 M817.0,671 L820.6,574.0 L823.0,671 M833.0,671 L838.0,452.0 L843.0,671 M848.0,671 L853.2,354.0 L858.0,671 M863.0,671 L868.0,432.0 L873.0,671 M871.0,671 L874.8,550.0 L878.0,671 M881.0,671 L884.0,584.0 L887.0,671 M894.0,671 L898.8,432.0 L904.0,671 M905.0,671 L909.2,452.0 L913.0,671 M913.0,671 L916.6,550.0 L918.0,570.0 L920.0,671 M921.0,671 L923.4,476.0 L927.0,476.0 L929.0,578.0 L931.0,671 M939.0,671 L942.6,541.0 L947.0,671 M947.0,671 L950.6,562.0 L957.0,671 M958.0,671 L959.0,400.0 L961.0,386.0 L963.0,386.0 L964.0,420.0 L966.0,671 M983.0,671 L987.4,574.0 L992.0,671 M994.0,671 L998.6,574.0 L1003.0,671 M1003.0,671 L1006.6,541.0 L1013.0,562.0 L1018.0,671 M1029.0,671 L1033.0,660.0 L1035.0,671 M1036.0,671 L1039.4,574.0 L1041.0,594.0 L1045.0,671 M1047.0,671 L1050.6,550.0 L1054.0,550.0 L1058.0,671 M1061.0,671 L1069.4,584.0 L1073.0,671 M1162.0,671 L1165.8,584.0 L1170.0,671" fill="none" stroke="#0000A8" stroke-width="1" shape-rendering="crispEdges"/>
<polyline points="151.5,491.5 152.0,492.0 158.1,492.0 161.2,491.0 166.2,495.0 172.3,494.0 177.4,496.6 184.5,497.0 191.6,502.7 196.6,503.5 199.7,501.1 202.7,503.1 207.8,503.1 210.8,504.8 216.9,506.8 223.0,506.8 225.0,505.6 235.2,507.2 240.2,509.2 246.3,504.8 260.5,512.9 273.7,512.9 276.7,514.9 287.9,514.9 291.9,516.9 300.0,517.3 303.1,518.9 317.3,518.9 320.3,520.4 328.4,521.0 334.5,517.7 338.6,519.8 344.6,519.8 347.7,521.8 354.8,522.4 361.9,524.8 377.1,524.8 380.1,526.4 385.2,526.9 391.3,530.9 400.4,526.4 403.4,530.9 411.5,529.1 415.6,531.1 421.7,530.5 433.2,526.1 437.2,527.7 449.4,527.7 454.5,525.7 460.6,524.1 464.6,523.3 470.7,520.6 480.8,514.6 485.9,509.1 489.9,509.1 499.1,503.4 507.2,495.3 511.2,488.2 516.3,487.6 521.4,481.1 530.5,468.9 541.7,460.4 549.8,460.4 553.8,461.8 557.9,460.8 565.0,454.7 572.1,455.8 576.1,449.7 582.2,446.2 584.2,447.0 590.3,446.6 594.4,440.6 601.5,440.6 604.5,434.9 608.6,436.5 614.6,431.4 621.7,426.8 630.9,426.4 634.9,429.0 639.0,428.8 645.1,425.3 649.1,427.0 653.2,424.3 656.2,418.7 660.3,421.9 663.3,420.3 667.4,412.2 671.4,413.2 675.5,416.2 679.5,415.2 682.0,425.2 686.1,413.0 693.2,409.9 697.2,396.8 701.3,408.9 704.3,408.9 708.4,412.0 712.4,405.9 716.5,405.9 719.5,391.7 722.6,393.7 730.7,387.6 733.7,389.7 737.8,399.8 741.8,384.6 744.9,393.7 749.9,393.7 753.0,396.8 758.1,378.5 761.1,379.5 764.1,395.8 768.2,395.8 772.3,378.5 775.3,381.6 783.4,372.4 786.4,379.5 790.5,377.5 795.6,372.4 799.6,381.6 808.7,364.3 812.8,378.5 820.9,381.6 826.0,375.5 831.0,386.6 835.1,391.7 838.1,379.5 842.2,385.6 849.3,370.4 854.4,384.6 858.4,380.6 860.4,372.4 866.5,371.4 871.6,366.4 882.8,359.3 890.9,372.4 899.0,379.5 905.1,369.4 909.1,377.5 913.2,366.4 916.2,398.8 921.3,376.5 925.3,370.4 928.4,371.4 932.4,363.3 938.5,365.3 942.6,360.3 945.6,369.4 950.7,360.3 953.7,369.4 961.3,379.5 968.4,376.5 972.4,368.4 978.5,367.4 984.6,361.3 990.7,359.9 998.8,372.4 1001.8,370.4 1005.9,354.6 1011.0,359.3 1017.0,367.4 1021.1,361.3 1028.2,372.4 1034.3,365.3 1043.4,371.4 1046.4,361.3 1050.5,364.7 1060.6,364.3 1062.7,359.3 1069.8,363.9 1072.8,370.0 1075.8,360.7 1085.0,360.7 1089.0,365.3 1095.1,359.9 1102.2,368.0 1106.3,362.7 1110.3,362.7 1113.4,370.8 1118.4,370.4 1126.5,372.4 1135.7,376.9 1140.7,373.5 1145.8,371.4 1148.8,373.5 1153.9,381.6 1160.0,382.6 1163.0,384.6 1170.1,378.5 1173.2,383.6 1176.2,376.9 1180.3,376.9 1185.3,386.6 1193.4,391.7 1198.5,392.3 1204.6,396.8 1211.7,395.1 1216.8,394.7 1217.0,393.7" fill="none" stroke="#408080" stroke-width="2" stroke-linejoin="round" shape-rendering="crispEdges"/>
<polyline points="151.5,290.6 151.5,291.0 156.1,282.8 160.1,282.4 163.2,280.8 170.3,279.4 174.3,278.0 180.4,276.8 186.5,285.5 192.6,292.2 195.6,291.0 212.9,291.0 217.9,281.4 222.0,281.4 226.0,273.9 233.1,269.9 236.2,271.9 240.2,271.9 245.3,273.9 253.4,273.9 261.5,274.7 266.6,280.4 273.7,284.1 277.7,291.6 285.8,296.6 289.9,300.3 296.0,302.3 302.1,303.7 310.2,304.3 314.2,309.8 321.3,307.8 325.4,310.8 329.4,318.9 333.5,317.9 337.5,324.0 341.6,321.4 344.6,322.0 350.7,327.5 355.8,326.0 362.9,335.2 370.0,342.3 380.1,347.3 385.2,343.7 389.2,347.3 392.3,342.9 397.4,347.3 403.4,344.9 407.5,342.3 411.5,341.2 417.6,333.5 423.5,328.9 427.9,329.4 431.4,331.9 437.5,332.9 441.0,329.8 444.5,324.0 451.5,324.0 455.0,320.1 459.4,315.4 465.5,312.2 472.5,310.1 479.5,307.9 485.6,307.5 490.0,301.8 493.5,295.6 501.4,286.4 507.5,282.1 514.5,280.4 518.9,279.5 523.2,272.9 526.4,276.4 530.2,270.2 535.5,267.6 540.8,265.9 546.9,257.6 549.5,256.6 553.0,258.0 560.0,258.9 560.2,259.1 586.6,259.8 588.7,265.3 594.7,267.9 597.8,269.4 600.8,275.5 603.9,278.5 607.9,286.6 611.5,286.6 615.2,292.6 619.6,291.4 624.0,296.6 627.5,297.5 630.1,305.4 634.5,304.1 638.0,305.4 655.5,305.4 659.0,306.2 672.1,306.2 676.5,300.6 682.3,296.4 690.4,294.4 694.5,299.5 701.6,301.1 708.7,314.7 716.8,317.7 722.9,323.8 726.9,322.2 732.0,322.8 739.1,329.9 756.0,349.1 761.1,355.2 769.2,360.3 776.3,363.9 783.4,363.9 786.4,370.4 790.5,373.5 796.6,386.6 803.7,395.8 811.8,403.9 817.9,405.9 821.9,415.0 830.0,420.1 838.1,423.7 846.3,426.2 850.3,432.3 857.4,436.3 861.5,443.4 871.6,441.4 876.7,448.5 882.8,452.5 893.9,463.7 900.0,474.8 905.1,473.8 916.2,473.8 922.9,485.5 930.9,499.4 940.0,502.4 950.1,502.4 953.2,509.5 957.2,510.6 960.3,517.0 963.3,517.0 968.4,513.6 972.4,515.6 980.6,517.6 991.7,517.6 993.7,514.2 998.8,517.0 1013.0,518.1 1021.1,518.7 1024.1,514.6 1029.2,517.0 1033.3,511.6 1036.3,511.0 1041.4,502.4 1045.4,499.4 1050.5,490.3 1057.6,485.2 1061.7,486.6 1064.7,482.6 1068.7,485.2 1071.8,479.9 1075.8,477.1 1084.0,467.7 1087.0,461.7 1094.1,454.6 1102.2,450.5 1107.3,442.4 1114.4,436.3 1123.5,432.3 1126.5,427.2 1132.6,418.7 1139.7,417.5 1143.8,421.1 1148.8,417.0 1151.9,416.0 1159.0,402.9 1165.1,395.8 1169.1,388.3 1173.2,386.6 1176.2,381.6 1181.3,383.6 1185.3,376.9 1191.4,377.5 1197.5,373.5 1203.6,372.8 1206.6,376.1 1213.7,367.4 1217.0,367.4" fill="none" stroke="#00FF00" stroke-width="2" stroke-linejoin="round" shape-rendering="crispEdges"/>
<polyline points="151.5,165.9 151.5,166.7 156.2,165.3 158.2,163.9 165.3,162.9 170.3,161.8 173.4,158.8 177.4,157.8 182.5,156.8 185.6,155.1 195.7,154.3 199.7,151.7 203.8,150.7 209.9,149.7 216.0,148.7 224.1,147.6 240.3,147.6 244.3,146.2 250.4,144.2 256.5,143.0 266.7,142.2 286.9,141.6 291.0,140.6 311.3,140.1 315.3,138.9 321.4,138.1 327.5,136.9 333.6,134.1 341.7,132.0 349.8,130.8 357.9,130.0 372.1,129.0 398.4,128.4 400.5,127.4 418.7,127.4 430.1,125.8 432.2,124.2 441.3,123.8 443.3,123.0 509.2,123.0 513.3,124.6 519.3,126.2 523.4,127.2 526.4,129.3 530.5,130.3 537.6,137.4 541.7,139.4 548.7,146.5 553.8,156.6 565.0,168.8 572.1,176.9 576.1,177.3 580.2,182.0 584.2,184.0 589.3,191.1 593.4,191.1 599.4,197.2 603.5,198.2 609.6,202.9 617.7,204.9 622.8,208.3 629.8,212.4 634.9,220.5 639.0,222.5 642.0,227.6 646.1,230.6 653.2,238.7 656.2,239.4 660.0,244.7 667.1,248.4 674.2,256.5 679.3,256.9 682.3,263.0 686.4,259.9 692.4,259.9 697.5,255.3 702.6,261.4 707.6,266.0 712.7,266.6 718.8,269.1 722.9,271.1 728.9,271.5 734.0,274.8 738.1,282.3 742.1,281.2 747.2,289.3 753.3,296.4 757.3,295.0 764.4,305.2 770.5,307.6 775.6,311.2 784.7,310.0 791.8,319.4 794.8,323.8 799.9,329.9 809.4,331.6 819.9,344.1 830.0,347.1 838.1,348.5 850.3,350.1 854.4,354.6 862.5,354.6 865.5,359.3 872.6,365.3 882.8,372.4 888.8,377.5 894.9,386.6 902.0,397.8 909.1,405.9 913.2,406.9 916.2,419.5 922.3,419.1 926.3,421.7 942.6,422.1 945.6,426.2 953.7,425.6 961.3,423.5 975.5,425.6 982.6,425.6 988.7,426.8 998.8,421.1 1007.9,417.0 1018.1,416.6 1020.1,412.6 1029.2,412.0 1035.3,400.8 1043.4,392.7 1045.4,387.0 1057.6,372.4 1063.7,360.3 1069.8,350.1 1074.8,339.9 1074.8,341.0 1081.9,328.7 1086.0,322.7 1094.1,313.5 1100.2,305.8 1104.2,301.4 1110.3,292.3 1118.4,285.2 1123.5,281.1 1126.5,278.7 1134.6,275.0 1140.7,271.0 1148.8,267.9 1155.9,267.9 1163.0,265.3 1171.1,260.4 1176.2,258.8 1180.3,252.3 1185.3,251.7 1191.4,248.7 1195.5,248.3 1201.5,244.6 1205.6,243.2 1211.7,239.5 1217.0,235.5" fill="none" stroke="#800080" stroke-width="2" stroke-linejoin="round" shape-rendering="crispEdges"/>
<polyline points="151.5,438.9 152.0,439.3 155.1,439.3 157.1,440.7 162.2,440.7 165.2,444.3 170.3,444.7 176.4,450.4 183.5,450.8 189.5,456.1 194.6,458.5 200.7,459.5 206.8,459.9 209.8,461.6 214.9,462.2 216.9,463.6 223.0,463.6 225.0,462.6 235.2,463.6 239.2,465.6 247.3,466.2 253.4,469.7 260.5,473.7 273.7,473.7 276.7,475.8 287.9,475.8 291.9,477.8 302.1,478.8 311.2,479.2 313.2,482.9 320.3,484.9 336.5,485.3 338.6,486.9 344.6,487.3 347.7,488.9 354.8,489.3 361.9,492.6 377.1,492.6 380.1,494.6 385.2,495.4 391.3,499.1 397.4,496.6 403.4,499.1 430.1,499.3 432.2,498.7 449.4,498.9 452.4,497.3 460.6,494.9 464.6,494.3 472.7,490.2 478.8,484.8 482.9,482.1 486.9,478.7 491.0,478.1 497.0,474.6 501.1,469.9 505.2,465.3 509.2,462.9 515.3,455.8 523.4,445.6 527.5,436.5 531.5,430.4 536.6,420.3 550.5,406.9 557.5,400.8 561.0,397.6 568.0,390.2 572.4,387.6 578.5,380.1 585.5,375.4 592.5,368.4 597.8,363.1 602.1,360.9 605.6,357.0 608.2,356.6 615.2,350.0 622.2,343.0 629.2,336.4 634.5,333.4 638.9,331.1 646.8,322.9 650.2,321.5 653.8,315.0 659.0,311.1 664.2,305.4 671.2,295.4 675.6,294.9 679.3,294.4 682.3,297.5 688.4,297.5 693.5,294.4 696.5,290.4 702.6,284.9 708.7,283.3 713.7,280.2 716.8,275.2 718.8,266.6 724.9,264.0 731.0,256.9 736.0,253.9 742.1,249.8 749.2,239.1 755.3,236.6 760.4,228.1 771.5,222.8 776.6,215.3 782.7,214.7 789.8,199.1 795.8,194.5 800.0,194.8 808.1,187.7 812.2,179.6 816.2,174.5 821.3,181.6 828.4,187.3 835.5,191.8 843.6,184.7 849.7,173.5 852.7,173.5 857.8,178.0 861.8,170.5 864.9,156.3 872.0,142.1 879.1,136.6 883.1,131.3 891.2,130.9 895.3,124.9 901.4,110.7 909.5,98.5 915.6,90.4 919.6,92.8 923.7,92.0 927.7,85.3 932.8,82.7 939.9,84.7 947.0,73.2 951.0,73.2 957.1,98.5 961.2,102.1 968.3,91.4 972.3,89.4 976.4,82.3 983.5,73.2 988.6,73.2 993.6,92.4 998.7,102.1 1002.8,98.5 1009.8,85.9 1014.9,92.4 1018.0,97.5 1020.0,103.6 1024.0,104.2 1032.2,117.8 1035.2,128.9 1039.2,140.1 1045.3,145.1 1054.5,154.3 1058.5,161.3 1064.6,179.6 1071.7,191.8 1075.7,196.8 1088.0,208.1 1094.1,212.2 1098.1,218.2 1106.3,226.4 1112.3,234.5 1118.4,238.5 1124.5,245.6 1130.6,248.7 1137.7,253.1 1142.8,251.7 1146.8,251.1 1152.9,254.7 1163.0,265.3 1169.1,265.9 1175.2,269.9 1181.3,275.4 1186.3,278.1 1191.4,283.5 1196.5,287.6 1202.6,294.3 1209.7,296.3 1217.0,299.8" fill="none" stroke="#FF0080" stroke-width="2" stroke-linejoin="round" shape-rendering="crispEdges"/>
<polyline points="537.0,670.0 541.0,662.4 546.0,669.0 549.0,668.0 553.0,654.0 557.0,664.4 563.0,662.0 568.0,664.4 576.0,656.0 578.6,631.0 582.0,652.0 587.0,653.6 592.0,661.0 598.0,654.4 603.0,660.0 606.0,657.0 610.0,662.4 615.0,664.0 619.0,648.0 623.0,600.0 627.0,598.4 631.0,617.0 634.6,584.0 638.0,624.0 642.0,629.0 646.0,640.0 649.4,616.0 654.0,643.0 656.6,624.0 661.0,640.0 664.6,604.0 668.0,640.0 671.4,607.0 676.5,629.0 681.0,638.0 687.0,650.0 693.0,658.4 699.0,647.0 705.0,635.0 708.6,647.0 712.5,631.4 717.0,650.0 721.5,651.5 726.0,656.0 730.5,653.0 733.5,647.0 738.6,587.0 742.5,620.0 745.5,617.0 750.0,639.5 753.0,633.5 757.5,644.0 760.5,636.5 765.0,653.0 768.0,653.0 771.0,603.5 775.5,639.5 780.0,633.5 784.5,632.0 789.0,621.5 792.0,629.0 795.0,602.0 801.0,620.0 805.0,620.0 810.0,638.0 816.0,651.0 821.0,651.0 831.0,662.4 835.0,644.0 838.6,617.0 842.0,642.0 849.0,647.0 851.0,594.0 853.4,542.0 855.0,570.0 857.0,614.0 861.0,586.0 864.0,612.0 868.0,547.0 871.0,592.0 875.0,600.0 879.0,626.0 883.0,618.0 887.0,639.0 895.0,604.0 901.0,553.0 905.0,606.0 909.0,575.0 913.0,612.0 917.0,613.0 920.0,626.0 920.0,626.0 924.0,580.0 927.0,589.0 931.0,600.0 935.0,600.0 939.0,623.0 942.6,601.0 947.0,632.0 951.0,620.0 954.0,621.0 957.4,637.0 961.4,583.0 965.0,628.0 968.0,629.0 973.0,643.0 980.0,654.4 985.0,656.0 988.0,655.0 993.0,663.0 995.0,660.0 998.0,625.0 1003.0,651.0 1007.0,645.0 1010.0,645.0 1013.4,629.0 1018.0,649.6 1021.0,651.0 1025.0,658.0 1031.0,659.0 1035.0,663.0 1040.0,663.0 1043.0,642.0 1047.0,656.0 1051.0,651.0 1055.0,652.0 1059.0,658.0 1063.0,659.0 1067.0,658.0 1071.0,663.0 1075.0,665.0 1076.5,666.6 1083.3,668.8 1090.0,669.9 1099.0,670.4 1110.3,670.4" fill="none" stroke="#000" stroke-width="2" stroke-linejoin="round" shape-rendering="crispEdges"/>
<rect x="412" y="668" width="2" height="12" fill="#FFFF00"/>
<rect x="516" y="668" width="2" height="12" fill="#808080"/>
<rect x="1099" y="668" width="2" height="12" fill="#FFFF00"/>
<rect x="1110" y="668" width="2" height="12" fill="#808080"/>
<text x="10.0" y="702.0" fill="#000">15:24</text>
<path d="M40 701 L40 698 L42.5 695 L46.5 695 L49 698 L49 701 Z" fill="#FFFF00"/>
<text x="379.5" y="702.0" fill="#000">05:52</text>
<circle cx="413" cy="697" r="4.5" fill="none" stroke="#F8F0A0" stroke-width="1"/>
<circle cx="413" cy="697" r="3.2" fill="#FFFF00"/>
<path d="M518 694 L522 701 L520 701 L520 703 L518 703 L518 701 L515 701 Z" fill="#FFFF00"/>
<rect x="512.5" y="692.5" width="5" height="5" fill="none" stroke="#8080FF" stroke-width="1" stroke-dasharray="1 1"/>
<text x="524.0" y="702.0" fill="#000">08:12</text>
<text x="1066.0" y="702.0" fill="#000">21:17</text>
<rect x="1097.5" y="693.5" width="4" height="4" fill="none" stroke="#FFFF00"/>
<path d="M1108 692 L1112 692 L1112 696 L1114 696 L1110 701 L1106 696 L1108 696 Z" fill="#FFFF00"/>
<path d="M1111 700.5 H1116" stroke="#8080FF" stroke-width="1" stroke-dasharray="1 1"/>
<text x="1118.0" y="702.0" fill="#000">21:31</text>
<rect x="1" y="704" width="1372" height="90" fill="#CCF8F6"/>
<rect x="87" y="704" width="1" height="89" fill="#FFFFFF"/>
<rect x="88" y="704" width="1" height="89" fill="#A0A0A0"/>
<rect x="203" y="704" width="1" height="89" fill="#FFFFFF"/>
<rect x="204" y="704" width="1" height="89" fill="#A0A0A0"/>
<rect x="322" y="704" width="1" height="89" fill="#FFFFFF"/>
<rect x="323" y="704" width="1" height="89" fill="#A0A0A0"/>
<rect x="440" y="704" width="1" height="89" fill="#FFFFFF"/>
<rect x="441" y="704" width="1" height="89" fill="#A0A0A0"/>
<rect x="558" y="704" width="1" height="89" fill="#FFFFFF"/>
<rect x="559" y="704" width="1" height="89" fill="#A0A0A0"/>
<rect x="676" y="704" width="1" height="89" fill="#FFFFFF"/>
<rect x="677" y="704" width="1" height="89" fill="#A0A0A0"/>
<rect x="794" y="704" width="1" height="89" fill="#FFFFFF"/>
<rect x="795" y="704" width="1" height="89" fill="#A0A0A0"/>
<rect x="912" y="704" width="1" height="89" fill="#FFFFFF"/>
<rect x="913" y="704" width="1" height="89" fill="#A0A0A0"/>
<text x="9.0" y="722.0" fill="#000" font-weight="bold" letter-spacing="0.5">Sensor</text>
<text x="9.0" y="738.0" fill="#000" font-weight="bold" letter-spacing="0.5">MinWert</text>
<text x="9.0" y="754.0" fill="#000" font-weight="bold" letter-spacing="0.5">MaxWert</text>
<text x="9.0" y="770.0" fill="#000" font-weight="bold" letter-spacing="0.5">Durchschnitt</text>
<text x="9.0" y="786.0" fill="#000" font-weight="bold" letter-spacing="0.5">01.08.  23:55</text>
<text x="95.0" y="722.0" fill="#000" font-weight="bold" letter-spacing="0.5">Temp. A.</text>
<text x="198.5" y="722.0" fill="#000" text-anchor="end" font-weight="bold" letter-spacing="0.5">°C</text>
<text x="100.0" y="738.0" fill="#000">06:10</text>
<text x="198.5" y="738.0" fill="#000" text-anchor="end">8.0</text>
<text x="100.0" y="754.0" fill="#000">18:45</text>
<text x="198.5" y="754.0" fill="#000" text-anchor="end">30.5</text>
<text x="100.0" y="770.0" fill="#000">(+ 1.44 )</text>
<text x="198.5" y="770.0" fill="#000" text-anchor="end">17.74</text>
<text x="97.0" y="786.0" fill="#000">F: 73 %</text>
<text x="198.5" y="786.0" fill="#000" text-anchor="end" font-weight="bold" letter-spacing="0.5">18.5</text>
<text x="212.0" y="722.0" fill="#000" font-weight="bold" letter-spacing="0.5">Feuchte A.</text>
<text x="316.5" y="722.0" fill="#000" text-anchor="end" font-weight="bold" letter-spacing="0.5">%</text>
<text x="218.0" y="738.0" fill="#000">17:10</text>
<text x="316.5" y="738.0" fill="#000" text-anchor="end">37</text>
<text x="218.0" y="754.0" fill="#000">06:20</text>
<text x="316.5" y="754.0" fill="#000" text-anchor="end">91</text>
<text x="316.5" y="770.0" fill="#000" text-anchor="end">70</text>
<text x="215.0" y="786.0" fill="#000">11.55 g/m³</text>
<text x="316.5" y="786.0" fill="#000" text-anchor="end" font-weight="bold" letter-spacing="0.5">73</text>
<text x="330.0" y="722.0" fill="#000" font-weight="bold" letter-spacing="0.5">Luftdruck</text>
<text x="434.5" y="722.0" fill="#000" text-anchor="end" font-weight="bold" letter-spacing="0.5">hPa</text>
<text x="336.0" y="738.0" fill="#000">18:10</text>
<text x="434.5" y="738.0" fill="#000" text-anchor="end">1013.9</text>
<text x="336.0" y="754.0" fill="#000">08:55</text>
<text x="434.5" y="754.0" fill="#000" text-anchor="end">1015.8</text>
<text x="330.0" y="770.0" fill="#000">^0.4hPa/h</text>
<text x="434.5" y="770.0" fill="#000" text-anchor="end">1015.0</text>
<text x="330.0" y="786.0" fill="#000">Schneefall</text>
<text x="434.5" y="786.0" fill="#000" text-anchor="end" font-weight="bold" letter-spacing="0.5">1015.0</text>
<text x="447.5" y="722.0" fill="#000" font-weight="bold" letter-spacing="0.5">Wind</text>
<text x="552.0" y="722.0" fill="#000" text-anchor="end" font-weight="bold" letter-spacing="0.5">km/h</text>
<text x="447.5" y="738.0" fill="#000">Ø 10 min.</text>
<text x="552.0" y="738.0" fill="#000" text-anchor="end">0.0</text>
<text x="454.0" y="754.0" fill="#000">15:45</text>
<text x="552.0" y="754.0" fill="#000" text-anchor="end">SO 11.1</text>
<text x="454.0" y="770.0" fill="#000">24.8 km</text>
<text x="552.0" y="770.0" fill="#000" text-anchor="end">0.6</text>
<text x="454.0" y="786.0" fill="#000">0 Bft SO</text>
<text x="552.0" y="786.0" fill="#000" text-anchor="end" font-weight="bold" letter-spacing="0.5">0.0</text>
<text x="566.0" y="722.0" fill="#000" font-weight="bold" letter-spacing="0.5">Richtung</text>
<text x="572.0" y="738.0" fill="#000">22:45</text>
<text x="669.5" y="738.0" fill="#000" text-anchor="end">N-NO</text>
<text x="572.0" y="754.0" fill="#000">21:50</text>
<text x="669.5" y="754.0" fill="#000" text-anchor="end">N</text>
<text x="669.5" y="770.0" fill="#000" text-anchor="end">S-SO</text>
<text x="569.0" y="786.0" fill="#000">135 °</text>
<text x="669.5" y="786.0" fill="#000" text-anchor="end" font-weight="bold" letter-spacing="0.5">SO</text>
<text x="684.0" y="722.0" fill="#000" font-weight="bold" letter-spacing="0.5">Regen</text>
<text x="788.5" y="722.0" fill="#000" text-anchor="end" font-weight="bold" letter-spacing="0.5">l/m²</text>
<text x="684.0" y="738.0" fill="#000">0 min.</text>
<text x="689.5" y="754.0" fill="#000">23:55</text>
<text x="788.5" y="754.0" fill="#000" text-anchor="end">0.0</text>
<text x="684.0" y="770.0" fill="#000">Gesamt:</text>
<text x="788.5" y="770.0" fill="#000" text-anchor="end">0.0</text>
<text x="687.0" y="786.0" fill="#000">0.0 l/m²</text>
<text x="788.5" y="786.0" fill="#000" text-anchor="end" font-weight="bold" letter-spacing="0.5">0.0</text>
<text x="802.0" y="722.0" fill="#000">Max. Sonnen 56,640°</text>
<text x="802.0" y="738.0" fill="#000">Sonnen Pos</text>
<text x="906.0" y="738.0" fill="#000" text-anchor="end">-17,272°</text>
<text x="802.0" y="754.0" fill="#000">Neumond</text>
<text x="905.0" y="754.0" fill="#000" text-anchor="end">29.08.11</text>
<text x="802.0" y="770.0" fill="#000">Vollmond</text>
<text x="905.0" y="770.0" fill="#000" text-anchor="end">13.08.11</text>
<text x="802.0" y="786.0" fill="#000">Mondphase</text>
<text x="907.0" y="786.0" fill="#000" text-anchor="end">+ 6%</text>
<text x="920.0" y="722.0" fill="#000">Wolkenunterg</text>
<text x="1022.5" y="722.0" fill="#000" text-anchor="end">759m</text>
<text x="920.0" y="738.0" fill="#000">Sichtweite</text>
<text x="1022.5" y="738.0" fill="#000" text-anchor="end">6-10km</text>
<text x="920.0" y="754.0" fill="#000">Schneefallgr</text>
<text x="1022.5" y="754.0" fill="#000" text-anchor="end">2750m</text>
<text x="920.0" y="770.0" fill="#000">Regen/1h</text>
<text x="1022.5" y="770.0" fill="#000" text-anchor="end">0.0l/m²</text>
<text x="920.0" y="786.0" fill="#000">Sonnenschein</text>
<text x="1023.0" y="786.0" fill="#000" text-anchor="end">0:00h</text>
<rect x="0" y="794" width="1373" height="6" fill="#F0F0F0"/>
<rect x="0" y="794" width="1373" height="1" fill="#A0A0A0"/>
<rect x="0" y="795" width="1373" height="1" fill="#FFFFFF"/>
<rect x="1" y="796" width="835" height="1" fill="#A0A0A0"/>
<rect x="1" y="796" width="1" height="4" fill="#A0A0A0"/>
<rect x="838" y="796" width="194" height="1" fill="#A0A0A0"/>
<rect x="838" y="796" width="1" height="4" fill="#A0A0A0"/>
<rect x="1034" y="796" width="171" height="1" fill="#A0A0A0"/>
<rect x="1034" y="796" width="1" height="4" fill="#A0A0A0"/>
<rect x="1207" y="796" width="41" height="1" fill="#A0A0A0"/>
<rect x="1207" y="796" width="1" height="4" fill="#A0A0A0"/>
<rect x="1250" y="796" width="52" height="1" fill="#A0A0A0"/>
<rect x="1250" y="796" width="1" height="4" fill="#A0A0A0"/>
<rect x="1304" y="796" width="67" height="1" fill="#A0A0A0"/>
<rect x="1304" y="796" width="1" height="4" fill="#A0A0A0"/>
<rect x="1371" y="704" width="1" height="90" fill="#FFFFFF"/>
<rect x="1372" y="703" width="1" height="97" fill="#A0A0A0"/>
<rect x="1373" y="0" width="1" height="800" fill="#1C7AD8"/>
<rect x="1374" y="0" width="7" height="800" fill="#032447"/>
</svg>
</body></html>
